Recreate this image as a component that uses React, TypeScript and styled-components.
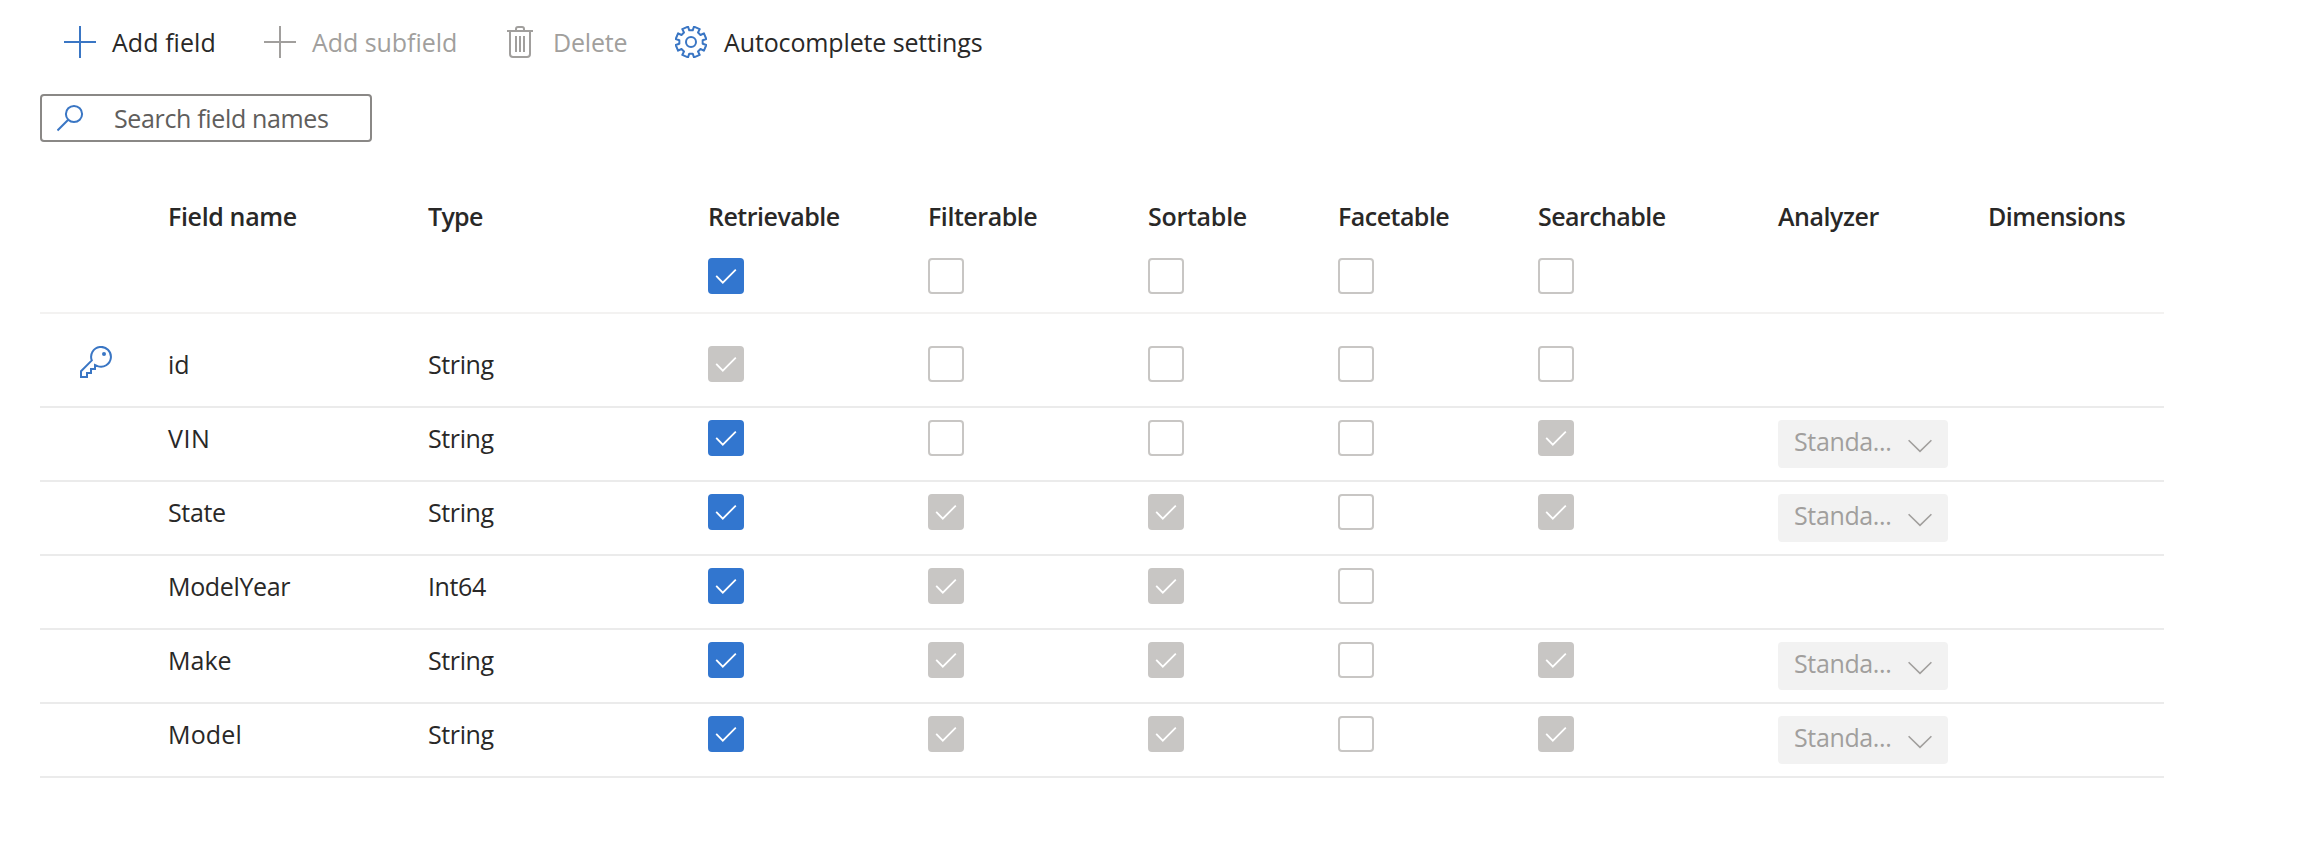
import React from "react";
import styled, { createGlobalStyle, css } from "styled-components";

const colors = {
  text: "#292827",
  muted: "#a19f9d",
  accent: "#3a76c4",
  checked: "#3276cf",
  disabled: "#c8c6c4",
};

const GlobalStyle = createGlobalStyle`
  * { box-sizing: border-box; }
  body {
    margin: 0;
    background: #fff;
    color: ${colors.text};
    font-family: "Open Sans", "Noto Sans", sans-serif;
    font-size: 25px;
    line-height: 36px;
  }
`;

const Page = styled.main`
  padding: 24px 134px 0 40px;
`;

const Toolbar = styled.div`
  display: grid;
  grid-template-columns: 200px 240px 171px max-content;
  padding-left: 24px;
`;

const Command = styled.button<{ $disabled?: boolean; $gap?: number }>`
  display: flex;
  align-items: center;
  gap: ${(p) => p.$gap ?? 16}px;
  height: 36px;
  padding: 0;
  border: 0;
  background: none;
  font: inherit;
  white-space: nowrap;
  color: ${(p) => (p.$disabled ? colors.muted : colors.text)};

  svg {
    flex: none;
    color: ${(p) => (p.$disabled ? colors.muted : colors.accent)};
  }
`;

const Label = styled.span<{ $tracking?: number }>`
  letter-spacing: ${(p) => p.$tracking ?? 0}px;
  white-space: nowrap;
`;

const SearchBox = styled.label`
  display: flex;
  align-items: center;
  width: 332px;
  height: 48px;
  margin-top: 34px;
  padding-left: 15px;
  border: 2px solid #8a8886;
  border-radius: 4px;

  svg {
    flex: none;
    color: ${colors.accent};
  }
`;

const SearchInput = styled.input`
  width: 230px;
  height: 36px;
  margin-left: 29px;
  padding: 0;
  border: 0;
  outline: 0;
  background: none;
  font: inherit;
  letter-spacing: -0.35px;

  &::placeholder {
    color: #605e5c;
    opacity: 1;
  }
`;

const Table = styled.div`
  margin-top: 56px;
`;

const columnsLayout = css`
  display: grid;
  grid-template-columns: 128px 260px 280px 220px 220px 190px 200px 240px 210px 176px;
  align-items: start;
`;

const HeaderRow = styled.div`
  ${columnsLayout}
  height: 116px;
  border-bottom: 2px solid #f3f2f1;
  font-weight: 600;
`;

const HeaderCell = styled.div`
  display: flex;
  flex-direction: column;
  gap: 24px;
`;

const Row = styled.div<{ $first?: boolean }>`
  ${columnsLayout}
  height: ${(p) => (p.$first ? 94 : 74)}px;
  padding-top: ${(p) => (p.$first ? 32 : 12)}px;
  border-bottom: 2px solid #ebebeb;
`;

const KeyCell = styled.div`
  padding-left: 40px;
  line-height: 0;
  color: ${colors.accent};
`;

const Box = styled.span<{ $state: CheckState }>`
  display: block;
  width: 36px;
  height: 36px;
  border-radius: 4px;
  border: ${(p) => (p.$state === "off" ? `2px solid ${colors.disabled}` : "0")};
  background: ${(p) =>
    p.$state === "on" ? colors.checked : p.$state === "locked" ? colors.disabled : "#fff"};

  svg {
    display: block;
  }
`;

const Dropdown = styled.div`
  display: flex;
  width: 170px;
  height: 48px;
  padding: 3px 16px 0 16px;
  border-radius: 4px;
  background: #f2f2f2;
  color: ${colors.muted};

  svg {
    flex: none;
    margin: 16px 0 0 auto;
  }
`;

type CheckState = "on" | "locked" | "off";

const PlusIcon = () => (
  <svg width="32" height="32" viewBox="0 0 32 32" fill="none" stroke="currentColor" strokeWidth="2">
    <path d="M16 0V32M0 16H32" />
  </svg>
);

const TrashIcon = () => (
  <svg width="32" height="32" viewBox="0 0 32 32" fill="none" stroke="currentColor" strokeWidth="2">
    <path d="M3 5H29M12 5V3a2 2 0 0 1 2-2h4a2 2 0 0 1 2 2V5M6 5V28a3 3 0 0 0 3 3H23a3 3 0 0 0 3-3V5" />
    <path d="M12 10V26M16 10V26M20 10V26" />
  </svg>
);

const gearOutline = Array.from({ length: 8 }, (_, i) => {
  const center = 22.5 + i * 45;
  return [
    [center - 14, 11.8],
    [center - 11.5, 15.6],
    [center + 11.5, 15.6],
    [center + 14, 11.8],
  ]
    .map(([deg, r]) => {
      const a = (deg * Math.PI) / 180;
      return `${(16 + r * Math.sin(a)).toFixed(2)},${(16 - r * Math.cos(a)).toFixed(2)}`;
    })
    .join(" ");
}).join(" ");

const GearIcon = () => (
  <svg width="32" height="32" viewBox="0 0 32 32" fill="none" stroke="currentColor" strokeWidth="2">
    <polygon points={gearOutline} strokeLinejoin="round" />
    <circle cx="16" cy="16" r="5" />
  </svg>
);

const SearchIcon = () => (
  <svg width="28" height="28" viewBox="0 0 28 28" fill="none" stroke="currentColor" strokeWidth="2">
    <circle cx="17" cy="10" r="8.1" />
    <path d="M.5 26.5L11.2 15.8" />
  </svg>
);

const KeyIcon = () => (
  <svg width="32" height="32" viewBox="0 0 32 32" fill="none" stroke="currentColor" strokeWidth="2">
    <path d="M11.8 14.4L1 25.2V31H7V27H11V23H15V19L17.6 20.1A9.9 9.9 0 1 0 11.8 14.4Z" />
    <circle cx="24" cy="8" r="2" fill="currentColor" stroke="none" />
  </svg>
);

const ChevronIcon = () => (
  <svg width="24" height="14" viewBox="0 0 24 14" fill="none" stroke="currentColor" strokeWidth="1.6">
    <path d="M.6 1.2L12 12.4L23.4 1.2" />
  </svg>
);

const Check = ({ state }: { state: CheckState }) => (
  <Box $state={state} role="checkbox" aria-checked={state !== "off"}>
    {state !== "off" && (
      <svg width="36" height="36" viewBox="0 0 36 36" fill="none" stroke="#fff" strokeWidth="1.8">
        <path d="M8.2 17.8L14.8 24.6L27.8 11.6" />
      </svg>
    )}
  </Box>
);

interface Column {
  name: string;
  tracking: number;
  state?: CheckState;
}

const columns: Column[] = [
  { name: "Field name", tracking: -0.35 },
  { name: "Type", tracking: -0.7 },
  { name: "Retrievable", tracking: -0.5 },
  { name: "Filterable", tracking: -0.45, state: "off" },
  { name: "Sortable", tracking: -0.27, state: "off" },
  { name: "Facetable", tracking: -0.53, state: "off" },
  { name: "Searchable", tracking: -0.57, state: "off" },
  { name: "Analyzer", tracking: -0.45 },
  { name: "Dimensions", tracking: -0.47 },
].map((column) => (column.name === "Retrievable" ? { ...column, state: "on" } : column)) as Column[];

interface Field {
  name: string;
  tracking: number;
  type: string;
  key?: boolean;
  checks: (CheckState | null)[];
  analyzer?: boolean;
}

const fields: Field[] = [
  { name: "id", tracking: 0, type: "String", key: true, checks: ["locked", "off", "off", "off", "off"] },
  { name: "VIN", tracking: 0.6, type: "String", checks: ["on", "off", "off", "off", "locked"], analyzer: true },
  { name: "State", tracking: -0.35, type: "String", checks: ["on", "locked", "locked", "off", "locked"], analyzer: true },
  { name: "ModelYear", tracking: -0.34, type: "Int64", checks: ["on", "locked", "locked", "off", null] },
  { name: "Make", tracking: 0, type: "String", checks: ["on", "locked", "locked", "off", "locked"], analyzer: true },
  { name: "Model", tracking: 0.16, type: "String", checks: ["on", "locked", "locked", "off", "locked"], analyzer: true },
];

export default function App() {
  return (
    <>
      <GlobalStyle />
      <Page>
        <Toolbar>
          <Command>
            <PlusIcon />
            <Label $tracking={0.06}>Add field</Label>
          </Command>
          <Command $disabled>
            <PlusIcon />
            <Label $tracking={-0.05}>Add subfield</Label>
          </Command>
          <Command $disabled $gap={17}>
            <TrashIcon />
            <Label $tracking={-0.2}>Delete</Label>
          </Command>
          <Command $gap={17}>
            <GearIcon />
            <Label $tracking={-0.13}>Autocomplete settings</Label>
          </Command>
        </Toolbar>
        <SearchBox>
          <SearchIcon />
          <SearchInput placeholder="Search field names" />
        </SearchBox>
        <Table>
          <HeaderRow>
            <span />
            {columns.map((column) => (
              <HeaderCell key={column.name}>
                <Label $tracking={column.tracking}>{column.name}</Label>
                {column.state && <Check state={column.state} />}
              </HeaderCell>
            ))}
          </HeaderRow>
          {fields.map((field) => (
            <Row key={field.name} $first={field.key}>
              <KeyCell>{field.key && <KeyIcon />}</KeyCell>
              <Label $tracking={field.tracking}>{field.name}</Label>
              <Label $tracking={-0.4}>{field.type}</Label>
              {field.checks.map((state, i) => (
                <div key={i}>{state && <Check state={state} />}</div>
              ))}
              {field.analyzer && (
                <Dropdown>
                  <Label $tracking={-0.36}>Standa...</Label>
                  <ChevronIcon />
                </Dropdown>
              )}
            </Row>
          ))}
        </Table>
      </Page>
    </>
  );
}
